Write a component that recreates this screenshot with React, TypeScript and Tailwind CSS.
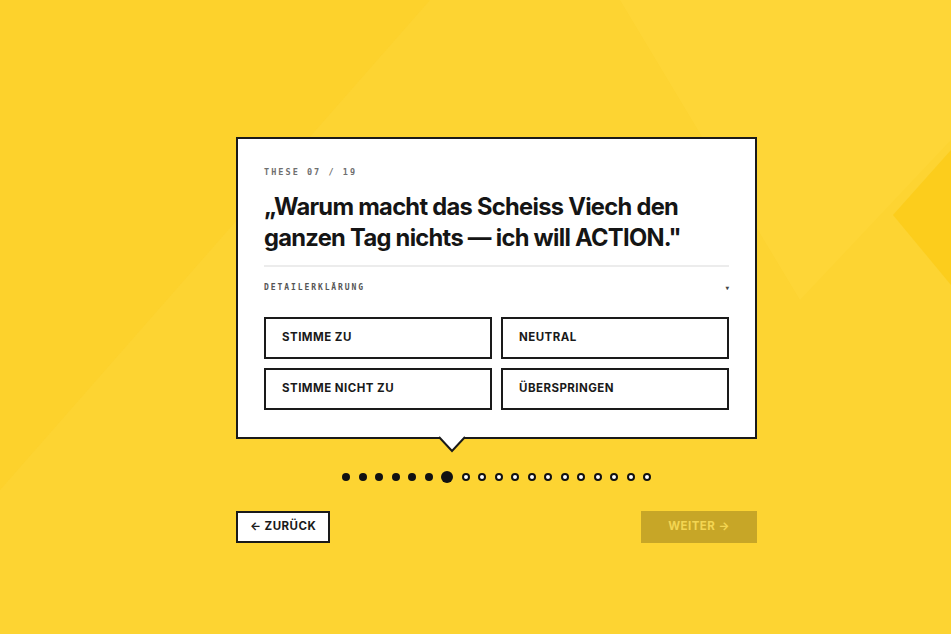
import React from 'react';

const TOTAL = 19;
const CURRENT = 7;

const answers = ['STIMME ZU', 'NEUTRAL', 'STIMME NICHT ZU', 'ÜBERSPRINGEN'];

function Backdrop() {
  // soft diagonal facets behind the card
  return (
    <svg className="absolute inset-0 h-full w-full" viewBox="0 0 951 634" preserveAspectRatio="none">
      <rect width="951" height="634" fill="#fdd22c" />
      <polygon points="430,0 951,0 951,634 0,634 0,490" fill="#fed638" opacity="0.5" />
      <polygon points="620,0 951,0 951,140 800,300" fill="#fed93e" opacity="0.4" />
      <polygon points="951,150 893,215 951,285" fill="#fccd1c" />
    </svg>
  );
}

function Dots() {
  return (
    <div className="flex items-center justify-center gap-[8.5px]">
      {Array.from({ length: TOTAL }, (_, i) => {
        const n = i + 1;
        if (n === CURRENT) return <span key={i} className="h-[12px] w-[12px] rounded-full bg-[#111]" />;
        if (n < CURRENT) return <span key={i} className="h-[8px] w-[8px] rounded-full bg-[#111]" />;
        return <span key={i} className="h-[8px] w-[8px] rounded-full border-[2px] border-[#111] bg-white" />;
      })}
    </div>
  );
}

export default function App() {
  return (
    <div className="relative h-[634px] w-[951px] overflow-hidden" style={{ fontFamily: 'Inter, "Noto Sans", sans-serif' }}>
      <Backdrop />
      <div className="relative ml-[236px] flex w-[521px] flex-col pt-[137px]">
        <div className="relative border-2 border-[#1a1a1a] bg-white px-[26px] pb-[27px] pt-[27px]">
          <div className="font-['DejaVu_Sans_Mono',monospace] text-[8.5px] font-bold leading-[12px] tracking-[0.24em] text-[#6f6f6f]">
            THESE 07 / 19
          </div>
          <h1 className="mt-[13px] text-[23.7px] font-bold leading-[31px] tracking-[-0.03em] text-[#151515]">
            „Warum macht das Scheiss Viech den ganzen Tag nichts — ich will ACTION."
          </h1>
          <div className="mt-[12px] h-[2px] bg-[#ececec]" />
          <div className="mt-[15px] flex items-center justify-between font-['DejaVu_Sans_Mono',monospace] text-[8px] font-bold leading-[12px] tracking-[0.24em] text-[#555]">
            <span>DETAILERKLÄRUNG</span>
            <span className="text-[6px] tracking-normal text-[#444]">▼</span>
          </div>
          <div className="mt-[23px] grid grid-cols-2 gap-x-[9px] gap-y-[9px]">
            {answers.map((a) => (
              <div
                key={a}
                className="flex h-[42px] items-center border-2 border-[#1a1a1a] bg-white pl-[16px] text-[11.5px] font-bold tracking-[0.04em] text-[#1a1a1a]"
              >
                {a}
              </div>
            ))}
          </div>
          {/* speech tail */}
          <svg className="absolute bottom-[-16px] left-[200px]" width="28" height="17" viewBox="0 0 28 17">
            <polygon points="0,0 14,15 28,0" fill="#fff" />
            <polyline points="1,1 14,15 27,1" fill="none" stroke="#1a1a1a" strokeWidth="2" />
          </svg>
        </div>
        <div className="mt-[32px]">
          <Dots />
        </div>
        <div className="mt-[28px] flex items-center justify-between">
          <button className="flex h-[32px] items-center border-2 border-[#1a1a1a] bg-white px-[12px] text-[11.5px] font-bold tracking-[0.04em] text-[#1a1a1a]">
            ← ZURÜCK
          </button>
          <button className="flex h-[32px] w-[116px] items-center justify-center bg-[#c7a627] text-[11.5px] font-bold tracking-[0.04em] text-[#f3d552]">
            WEITER →
          </button>
        </div>
      </div>
    </div>
  );
}
